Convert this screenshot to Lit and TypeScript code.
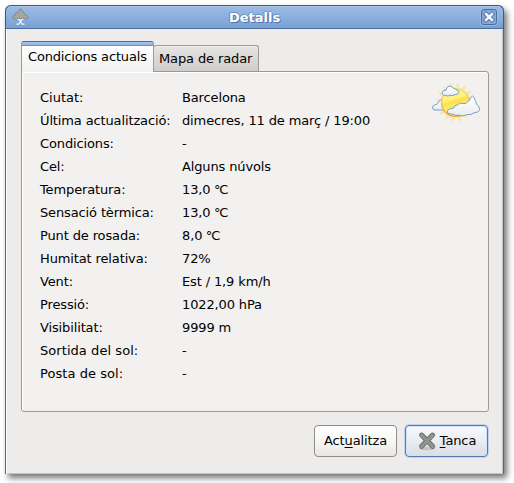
import { LitElement, html, css, svg } from "lit";
import { customElement } from "lit/decorators.js";

const celsius = (n: string) => html`${n} <i class="deg">°</i>C`;

const rows: [string, unknown, string?][] = [
  ["Ciutat:", "Barcelona", "normal"],
  ["Última actualització:", "dimecres, 11 de març / 19:00"],
  ["Condicions:", "-"],
  ["Cel:", "Alguns núvols"],
  ["Temperatura:", celsius("13,0")],
  ["Sensació tèrmica:", celsius("13,0")],
  ["Punt de rosada:", celsius("8,0")],
  ["Humitat relativa:", "72%"],
  ["Vent:", "Est / 1,9 km/h"],
  ["Pressió:", "1022,00 hPa"],
  ["Visibilitat:", "9999 m"],
  ["Sortida del sol:", "-", "loose"],
  ["Posta de sol:", "-", "loose"],
];

const rays = Array.from({ length: 16 }, (_, i) => i * 22.5 + 8);

@customElement("app-root")
export class AppRoot extends LitElement {
  static styles = css`
    :host {
      display: block;
      box-sizing: border-box;
      width: 514px;
      height: 483px;
      padding: 5px 10px 9px 5px;
      overflow: hidden;
      background: #fff;
      color: #000;
      font: 13px/23px "DejaVu Sans", sans-serif;
      letter-spacing: -0.13px;
    }
    * { box-sizing: border-box; }
    .window {
      display: flex;
      flex-direction: column;
      width: 499px;
      height: 469px;
      border: 1px solid #646464;
      border-top: 0;
      border-radius: 6px 6px 0 0;
      background: #edeceb;
      box-shadow: 3px 4px 6px rgba(0, 0, 0, 0.55);
    }
    .titlebar {
      display: flex;
      align-items: center;
      flex: none;
      height: 24px;
      margin: 0 -1px;
      padding: 0 5px;
      border: 1px solid #3a5c8c;
      border-bottom-color: #4a6fa5;
      border-radius: 6px 6px 0 0;
      background: linear-gradient(#9dbbe4, #8db0de 45%, #7a9fd0);
      box-shadow: inset 0 1px #a9c4ea;
    }
    .title {
      flex: 1;
      text-align: center;
      font-weight: bold;
      letter-spacing: 0;
      color: #fff;
      text-shadow: 1px 1px #5076a9, -1px 0 #6288bd, 0 -1px #6d92c5;
    }
    svg { display: block; flex: none; }
    .body {
      display: flex;
      flex-direction: column;
      flex: 1;
      padding: 12px 14px 17px;
      border-left: 1px solid #fff;
      box-shadow: inset -1px -1px #c6c4c2;
    }
    .tabs { display: flex; align-items: flex-end; height: 30px; flex: none; }
    .tab {
      width: 106px;
      height: 26px;
      margin-left: -1px;
      padding-left: 5px;
      border: 1px solid #9c9a98;
      border-bottom: 0;
      border-radius: 3px 3px 0 0;
      line-height: 25px;
      letter-spacing: -0.12px;
      white-space: nowrap;
      background: linear-gradient(#e6e5e4, #cfcdcb);
      box-shadow: inset 0 1px #efeeed;
    }
    .tab.active {
      position: relative;
      width: 133px;
      height: 31px;
      margin: 0 0 -1px;
      padding: 3px 0 0 6px;
      border-color: #4a70a6 #9c9a98;
      line-height: 24px;
      letter-spacing: -0.17px;
      background: linear-gradient(#a3c1ea 1px, #8fb3e3 3px, #6f91bf 3px 4px, #fff 4px, #f2f1f0);
      box-shadow: none;
    }
    .panel {
      display: flex;
      flex: none;
      height: 341px;
      padding: 14px 7px 0 18px;
      border: 1px solid #9c9a98;
      border-radius: 0 3px 3px 3px;
      background: #f2f1f0;
      box-shadow: inset 1px 1px #fff;
    }
    .data {
      flex: 1;
      display: grid;
      grid-template-columns: 142px 1fr;
      grid-auto-rows: 23px;
      align-content: start;
      white-space: nowrap;
    }
    .normal { letter-spacing: 0; }
    .loose { letter-spacing: 0.06px; }
    .deg { font-style: normal; letter-spacing: -1.2px; margin-left: -0.5px; }
    .weather { margin-top: -5px; }
    .actions {
      display: flex;
      justify-content: flex-end;
      gap: 8px;
      margin-top: 13px;
      padding-right: 1px;
    }
    .button {
      display: flex;
      align-items: center;
      justify-content: center;
      width: 83px;
      height: 32px;
      padding: 0 0 2px;
      font: inherit;
      letter-spacing: -0.12px;
      color: #000;
      border: 1px solid #8f8d8b;
      border-radius: 4px;
      background: linear-gradient(#fff, #f7f7f6 50%, #e8e7e6);
    }
    .button.focused {
      gap: 3px;
      border-color: #537bb0;
      background: linear-gradient(#f7f9fc, #e9edf3 50%, #d9dde4);
      box-shadow: 0 0 0 1px #c3d4ea, inset 0 0 0 1px #d4e2f5;
    }
    .cross { margin-top: 1px; }
    u { text-underline-offset: 2px; text-decoration-thickness: 1px; text-decoration-skip-ink: none; }
  `;

  private appIcon() {
    return html`<svg width="18" height="18" viewBox="0 0 18 18">
      <path d="M9.5 9v5.5M6 10.8l2 .6 1.5 1.8 1.5-1.8 2-.6M9.5 13.5L7.8 16.2H5.5M9.5 13.5l1.7 2.7h2.3" fill="none" stroke="#f4f8fc" stroke-width="1.2" />
      <path d="M2 10Q1 8.4 3 7.4 4.2 7 4.6 6.8 4.3 4.2 6 4.1L7.2 4.2 8 3.4V1.2H10.5V2.8l1.8.8q1 .8.7 2.5l1.4.6q2.6.9 2.8 2.8l-1 1.3h-3l-1.6-.8-2 1-2.4-1-1.8.9H3z" fill="#a6a6a0" stroke="#7d827e" stroke-width=".8" />
    </svg>`;
  }

  private closeIcon() {
    return html`<svg width="18" height="18" viewBox="0 0 18 18">
      <rect x=".5" y=".5" width="17" height="17" rx="3" fill="none" stroke="#9ab8e2" />
      <rect x="1.5" y="1.5" width="15" height="15" rx="2.5" fill="#86a9d8" stroke="#466da4" />
      <path d="M6 6l6 6M12 6l-6 6" stroke="#4a71a8" stroke-width="4.4" stroke-linecap="square" />
      <path d="M6 6l6 6M12 6l-6 6" stroke="#f4f8fd" stroke-width="2.5" stroke-linecap="square" />
    </svg>`;
  }

  private weatherIcon() {
    return html`<svg class="weather" width="50" height="42" viewBox="0 0 50 42">
      <defs>
        <linearGradient id="sun" x1="0" y1="0" x2=".3" y2="1">
          <stop offset="0" stop-color="#fff6a8" /><stop offset=".45" stop-color="#fff07c" />
          <stop offset=".55" stop-color="#fde04a" /><stop offset="1" stop-color="#fff79a" />
        </linearGradient>
        <linearGradient id="edge" x1="0" y1="0" x2="0" y2="1">
          <stop offset="0" stop-color="#f5dc78" /><stop offset="1" stop-color="#f5a93a" />
        </linearGradient>
        <linearGradient id="cloud" x1="0" y1="0" x2="0" y2="1">
          <stop offset="0" stop-color="#fff" /><stop offset="1" stop-color="#e8ebef" />
        </linearGradient>
      </defs>
      ${rays.map((a) => svg`<path d="M24.5 1l1.8 5h-3.6z" fill="#f9e49a" transform="rotate(${a} 24.5 21.5)" />`)}
      <path d="M2 28q-2-3 1.5-4 2.2-.4 3.4-1.5Q7.5 19.5 10.5 18.5q3-.8 4 1.5l9 7-4 2H5q-2 .2-3-1z" fill="url(#cloud)" stroke="#7c9cc4" />
      <circle cx="24.5" cy="21.5" r="14" fill="url(#sun)" stroke="url(#edge)" stroke-width="1.5" />
      <path d="M11.5 13.3q-1.6-2.5 1.2-3.6l2.3-.5Q15.2 6 18 5.1q3-.3 4 2.1 2.4-.5 3 1.7 2.8-.1 3 2-.2 2.5-3.2 2.5l-3.8 1.2-2-.5-2 1-2.5-.7q-2 .2-3-1.1z" fill="url(#cloud)" stroke="#7c9cc4" />
      <path d="M17 32.5q-1.7-3.5 1.7-4.6l4.2-1q.6-3 3.6-3 1.7-2.9 5.1-1.4l3.4-.1q1.2-1.8 3.5-3.2.5-3.1 3-4.1 1.8.7 2.3 3.7 1.7 1.5 1.5 4.3 2.6 1.6 2.9 3.6 1.4 3.5-1.8 4.3l-3.7.9-3 1.8q-3.2-.7-5.2.4-3.8 1.7-6.4.1l-3.2.2-3-1.1z" fill="url(#cloud)" stroke="#7c9cc4" />
    </svg>`;
  }

  private crossIcon() {
    return html`<svg class="cross" width="20" height="20" viewBox="0 0 20 20">
      <ellipse cx="10" cy="17.5" rx="8" ry="1.7" fill="#c0c3c8" />
      <path d="M4.6 4.1l11 11.2M15.6 4.1l-11 11.2" stroke="#6a6c67" stroke-width="5" stroke-linecap="round" />
      <path d="M4.6 4.1l11 11.2M15.6 4.1l-11 11.2" stroke="#92948f" stroke-width="3.2" stroke-linecap="round" />
    </svg>`;
  }

  render() {
    return html`<div class="window">
      <div class="titlebar">${this.appIcon()}<div class="title">Detalls</div>${this.closeIcon()}</div>
      <div class="body">
        <div class="tabs">
          <div class="tab active">Condicions actuals</div>
          <div class="tab">Mapa de radar</div>
        </div>
        <div class="panel">
          <div class="data">
            ${rows.map(([k, v, fit = ""]) => html`<span class=${fit}>${k}</span><span>${v}</span>`)}
          </div>
          ${this.weatherIcon()}
        </div>
        <div class="actions">
          <button class="button"><span>Act<u>u</u>alitza</span></button>
          <button class="button focused">${this.crossIcon()}<span><u>T</u>anca</span></button>
        </div>
      </div>
    </div>`;
  }
}
